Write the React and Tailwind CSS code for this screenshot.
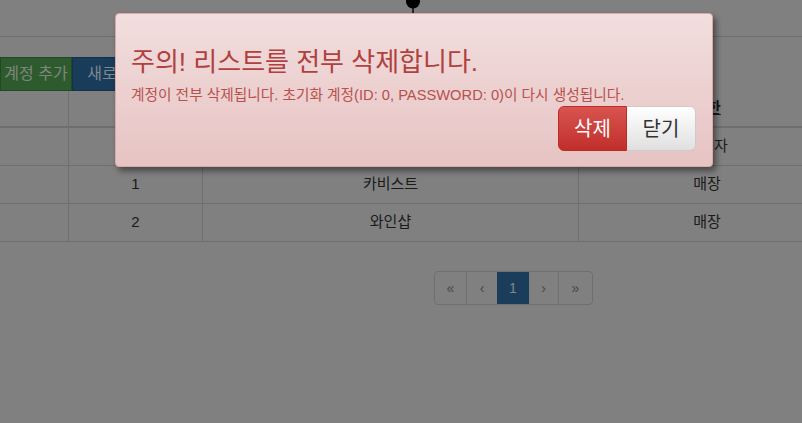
import React from "react";

const font = { fontFamily: '"Liberation Sans", "Noto Sans CJK KR", sans-serif' };

function Row({ a, b, c, header }) {
  return (
    <div
      className={
        "flex items-center text-[15px] text-[#1a1a1a] " +
        (header ? "h-[37px] border-b-2 border-[#6f6f6f] font-bold" : "h-[38px] border-b border-[#6f6f6f]")
      }
    >
      <div className="h-full w-[69px] border-r border-[#6f6f6f]" />
      <div className="flex h-full w-[134px] items-center justify-center border-r border-[#6f6f6f]">{a}</div>
      <div className="flex h-full w-[376px] items-center justify-center border-r border-[#6f6f6f]">{b}</div>
      <div className="flex h-full w-[256px] shrink-0 items-center justify-center">
        {header ? <span className="underline">{c}</span> : c}
      </div>
    </div>
  );
}

export default function App() {
  return (
    <div className="relative h-[423px] w-[802px] overflow-hidden bg-[#808080]" style={font}>
      {/* top bar */}
      <div className="relative h-[37px] border-b border-[#6f6f6f]">
        <svg className="absolute left-[404px] top-0" width="20" height="14" viewBox="0 0 20 14">
          <circle cx="9" cy="1.5" r="7" fill="#000" />
          <rect x="8.3" y="6" width="1.4" height="7" fill="#000" />
        </svg>
      </div>

      {/* buttons */}
      <div className="mt-[20px] flex h-[34px]">
        <div className="flex w-[72px] items-center justify-center border border-[#234723] bg-[#2e5b2e] text-[16px] text-[#7f867f]">
          계정 추가
        </div>
        <div className="flex w-[60px] items-center justify-center border border-[#15304a] bg-[#1a3c5b] text-[16px] text-[#808890]">
          새로
        </div>
      </div>

      {/* table */}
      <div className="w-[835px]">
        <Row header a="" b="" c="권한" />
        <Row a="" b="" c="관리자" />
        <Row a="1" b="카비스트" c="매장" />
        <Row a="2" b="와인샵" c="매장" />
      </div>

      {/* pagination */}
      <div className="mt-[29px] flex pl-[434px]">
        <div className="flex h-[34px] overflow-hidden rounded-[4px] border border-[#6f6f6f] text-[14px] text-[#474747]">
          <div className="flex w-[32px] items-center justify-center border-r border-[#6f6f6f]">«</div>
          <div className="flex w-[30px] items-center justify-center">‹</div>
          <div className="flex w-[32px] items-center justify-center bg-[#1a3d5c] text-[#80868c]">1</div>
          <div className="flex w-[30px] items-center justify-center border-r border-[#6f6f6f]">›</div>
          <div className="flex w-[33px] items-center justify-center">»</div>
        </div>
      </div>

      {/* modal alert */}
      <div className="absolute left-[115px] top-[13px] h-[154px] w-[598px] rounded-[4px] border border-[#dca7a7] bg-gradient-to-b from-[#f2dede] to-[#e7c3c3] px-[15px] shadow-[3px_4px_6px_rgba(0,0,0,0.45)]">
        <div className="mt-[33px] whitespace-nowrap text-[26px] leading-[30px] text-[#b0413e]">주의! 리스트를 전부 삭제합니다.</div>
        <div className="mt-[9px] whitespace-nowrap text-[14.7px] leading-[18px] text-[#b8504c]">
          계정이 전부 삭제됩니다. 초기화 계정(ID: 0, PASSWORD: 0)이 다시 생성됩니다.
        </div>
        <div className="mt-[2px] flex justify-end pr-[1px]">
          <button className="flex h-[45px] w-[69px] items-center justify-center rounded-l-[6px] border border-[#b92c28] bg-gradient-to-b from-[#d9534f] to-[#c12e2a] text-[20px] text-white">
            삭제
          </button>
          <button className="flex h-[45px] w-[69px] items-center justify-center rounded-r-[6px] border border-l-0 border-[#cccccc] bg-gradient-to-b from-[#ffffff] to-[#e0e0e0] text-[20px] text-[#333]">
            닫기
          </button>
        </div>
      </div>
    </div>
  );
}
